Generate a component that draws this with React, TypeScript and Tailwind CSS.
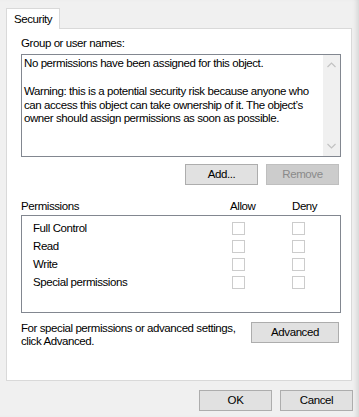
import React from 'react';

const PERMS = ['Full Control', 'Read', 'Write', 'Special permissions'];

const Chevron = ({ up }: { up?: boolean }) => (
  <svg width="9" height="6" viewBox="0 0 9 6" className="block">
    <path
      d={up ? 'M0.5 5 L4.5 1 L8.5 5' : 'M0.5 1 L4.5 5 L8.5 1'}
      fill="none"
      stroke="#c2c2c2"
      strokeWidth="1.2"
    />
  </svg>
);

const Box = () => <div className="w-[13px] h-[13px] border border-[#cccccc] bg-white" />;

const Button = ({ label, w, disabled }: { label: string; w: string; disabled?: boolean }) => (
  <div
    className={`${w} h-[21px] flex items-center justify-center border ${
      disabled ? 'bg-[#cccccc] border-[#bfbfbf] text-[#8a8a8a]' : 'bg-[#e1e1e1] border-[#adadad] text-black'
    }`}
  >
    {label}
  </div>
);

export default function App() {
  return (
    <div
      className="w-[359px] h-[417px] bg-[#f0f0f0] text-[11.5px] tracking-[-0.42px] leading-[13px] text-black overflow-hidden shadow-[inset_-5px_0_5px_-3px_rgba(0,0,0,0.12)]"
      style={{ fontFamily: '"Liberation Sans", Arial, sans-serif' }}
    >
      {/* tab strip */}
      <div className="pl-[6px] pt-[8px] flex">
        <div className="relative z-10 -mb-px h-[21px] w-[54px] bg-white border border-b-0 border-[#d9d9d9] flex items-center pl-[7px]">
          Security
        </div>
      </div>

      {/* tab page */}
      <div className="ml-[6px] w-[346px] h-[353px] bg-white border border-[#d9d9d9] pl-[14px] pr-[10px] pt-[8px]">
        <div className="h-[13px]">Group or user names:</div>

        <div className="mt-[4px] h-[103px] border border-[#828790] flex">
          <div className="flex-1 pl-[2px] pt-[2px] whitespace-nowrap">
            <p>No permissions have been assigned for this object.</p>
            <p className="mt-[15px] leading-[13.5px]">
              Warning: this is a potential security risk because anyone who
              <br />
              can access this object can take ownership of it. The object’s
              <br />
              owner should assign permissions as soon as possible.
            </p>
          </div>
          <div className="w-[17px] bg-[#f0f0f0] flex flex-col items-center justify-between py-[7px]">
            <Chevron up />
            <Chevron />
          </div>
        </div>

        <div className="mt-[7px] flex justify-end gap-[8px] pr-[2px]">
          <Button label="Add..." w="w-[73px]" />
          <Button label="Remove" w="w-[73px]" disabled />
        </div>

        <div className="mt-[15px] flex h-[13px]">
          <span className="flex-1">Permissions</span>
          <span className="w-[62px]">Allow</span>
          <span className="w-[49px]">Deny</span>
        </div>

        <div className="mt-[2px] h-[98px] border border-[#828790] pt-[3px] pl-[11px]">
          {PERMS.map((p) => (
            <div key={p} className="h-[18px] flex items-center">
              <span className="flex-1">{p}</span>
              <div className="w-[60px]">
                <Box />
              </div>
              <div className="w-[48px]">
                <Box />
              </div>
            </div>
          ))}
        </div>

        <div className="mt-[9px] flex items-start">
          <p className="flex-1 whitespace-nowrap">
            For special permissions or advanced settings,
            <br />
            click Advanced.
          </p>
          <div className="pr-[2px]">
            <Button label="Advanced" w="w-[88px]" />
          </div>
        </div>
      </div>

      <div className="mt-[9px] flex justify-end gap-[8px] pr-[6px]">
        <Button label="OK" w="w-[73px]" />
        <Button label="Cancel" w="w-[73px]" />
      </div>
    </div>
  );
}
